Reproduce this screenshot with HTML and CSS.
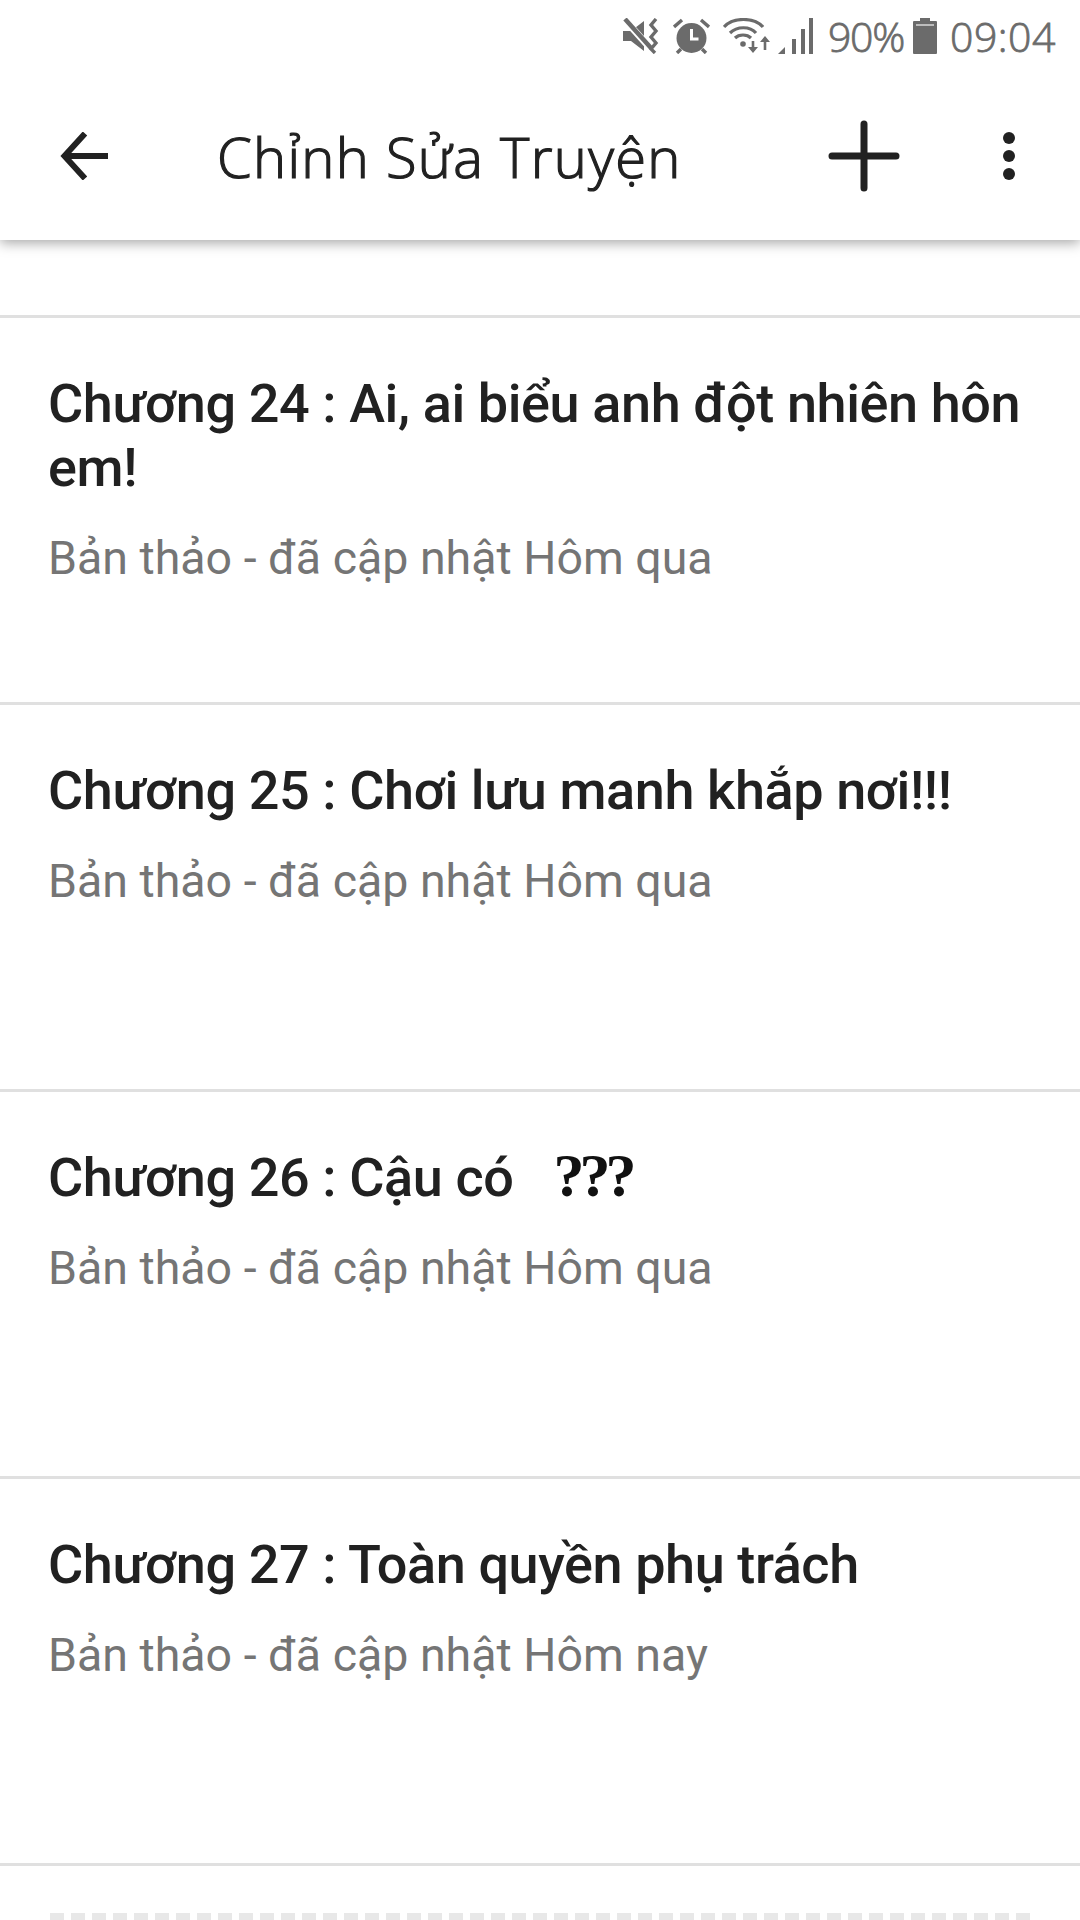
FILE: index.html
```html
<!DOCTYPE html>
<html lang="en">
<head>
    <meta charset="UTF-8">
    <meta name="viewport" content="width=device-width, initial-scale=1.0">
    <title>Chỉnh Sửa Truyện</title>
    <link rel="stylesheet" href="styles.css">
</head>
<body>
    <div class="status-bar">
        <svg class="icon-mute" width="37" height="36" viewBox="0 0 37 36">
            <path d="M0 13h8L21 3v30L8 23H0z" fill="#6b6b6b"/>
            <path d="M2 2l26 29" stroke="#fff" stroke-width="7"/>
            <path d="M2 1l26 29" stroke="#6b6b6b" stroke-width="4.5"/>
            <path d="M33 1l-5 6 5 6-5 6 5 6-5 6 4 4" fill="none" stroke="#6b6b6b" stroke-width="3.4"/>
        </svg>
        <svg class="icon-alarm" width="37" height="36" viewBox="0 0 37 36">
            <circle cx="18.5" cy="20" r="15" fill="#6b6b6b"/>
            <path d="M18.5 11v10h7" fill="none" stroke="#fff" stroke-width="3"/>
            <path d="M1 9l8-7M36 9l-8-7M4 35l4-4M33 35l-4-4" stroke="#6b6b6b" stroke-width="3.4"/>
        </svg>
        <svg class="icon-wifi" width="47" height="36" viewBox="0 0 47 36">
            <path d="M1 9C10-1 31-1 40 9" fill="none" stroke="#6b6b6b" stroke-width="3.2"/>
            <path d="M7 15C14 8 27 8 33 15" fill="none" stroke="#6b6b6b" stroke-width="3.2"/>
            <path d="M12 20c4-4 12-4 16 0" fill="none" stroke="#6b6b6b" stroke-width="3.2"/>
            <circle cx="20" cy="26" r="2.8" fill="#6b6b6b"/>
            <path d="M30 23v10M42 32V23" stroke="#6b6b6b" stroke-width="2.6"/>
            <path d="M25 29h10l-5 6zM37 24h10l-5-6z" fill="#6b6b6b"/>
        </svg>
        <svg class="icon-signal" width="35" height="36" viewBox="0 0 35 36">
            <path d="M0 36l7-7v7z" fill="#6b6b6b"/>
            <path d="M14 21h4v15h-4zM23 11h4v25h-4zM31 0h4v36h-4z" fill="#6b6b6b"/>
        </svg>
        <span class="status-text battery-text">90%</span>
        <svg class="icon-battery" width="24" height="36" viewBox="0 0 24 36">
            <path d="M7 0h10v3h6a1 1 0 0 1 1 1v31a1 1 0 0 1-1 1H1a1 1 0 0 1-1-1V4a1 1 0 0 1 1-1h6z" fill="#6b6b6b"/>
            <path d="M3 7h18" stroke="#bdbdbd" stroke-width="2"/>
        </svg>
        <span class="status-text clock">09:04</span>
    </div>

    <div class="app-bar">
        <svg class="back-icon" width="50" height="48" viewBox="0 0 50 48">
            <path d="M26 1.500L5.500 24l20.500 22.500M5.500 24H49" fill="none" stroke="#212121" stroke-width="6"/>
        </svg>
        <div class="app-title">Chỉnh Sửa Truyện</div>
        <svg class="add-icon" width="72" height="72" viewBox="0 0 72 72">
            <path d="M36 4v64M4 36h64" stroke="#212121" stroke-width="7" stroke-linecap="round"/>
        </svg>
        <svg class="more-icon" width="12" height="48" viewBox="0 0 12 48">
            <circle cx="6" cy="6" r="6" fill="#212121"/>
            <circle cx="6" cy="24" r="6" fill="#212121"/>
            <circle cx="6" cy="42" r="6" fill="#212121"/>
        </svg>
    </div>

    <div class="chapter-list">
        <div class="list-top"></div>
        <div class="chapter">
            <div class="chapter-title">Chương 24 : Ai, ai biểu anh đột nhiên hôn em!</div>
            <div class="chapter-meta">Bản thảo - đã cập nhật Hôm qua</div>
        </div>
        <div class="chapter">
            <div class="chapter-title">Chương 25 : Chơi lưu manh khắp nơi!!!</div>
            <div class="chapter-meta">Bản thảo - đã cập nhật Hôm qua</div>
        </div>
        <div class="chapter">
            <div class="chapter-title">Chương 26 : Cậu có <span class="odd-glyphs">???</span></div>
            <div class="chapter-meta">Bản thảo - đã cập nhật Hôm qua</div>
        </div>
        <div class="chapter">
            <div class="chapter-title">Chương 27 : Toàn quyền phụ trách</div>
            <div class="chapter-meta">Bản thảo - đã cập nhật Hôm nay</div>
        </div>
        <div class="chapter-cut">
            <div class="dashes"></div>
        </div>
    </div>
</body>
</html>
```

FILE: styles.css
```css
html, body {
    margin: 0;
    padding: 0;
}
body {
    width: 1080px;
    height: 1920px;
    overflow: hidden;
    background-color: #fff;
    font-family: Roboto, sans-serif;
}
svg {
    display: block;
    flex: none;
}
.status-bar {
    height: 72px;
    padding: 18px 0 0 623px;
    box-sizing: border-box;
    display: flex;
    align-items: flex-start;
    background-color: #fff;
    position: relative;
    z-index: 2;
}
.icon-mute {
    margin-right: 13px;
}
.icon-alarm {
    margin-right: 13px;
}
.icon-wifi {
    margin-right: 8px;
}
.status-text {
    font-family: "Open Sans", sans-serif;
    font-weight: 300;
    font-size: 41px;
    line-height: 36px;
    white-space: nowrap;
    color: #6b6b6b;
    -webkit-text-stroke: 0.8px #6b6b6b;
}
.battery-text {
    width: 75px;
    margin-left: 15px;
    margin-right: 10px;
    letter-spacing: -1.300px;
}
.clock {
    margin-left: 13px;
    letter-spacing: 0.5px;
}
.app-bar {
    height: 168px;
    box-sizing: border-box;
    display: flex;
    align-items: center;
    background-color: #fff;
    position: relative;
    z-index: 1;
    box-shadow: 0 3px 12px rgba(0,0,0,0.35);
}
.back-icon {
    margin-left: 59px;
}
.app-title {
    margin-left: 108px;
    width: 463px;
    font-family: "Open Sans", sans-serif;
    font-weight: 300;
    font-size: 56px;
    letter-spacing: 1.300px;
    white-space: nowrap;
    color: #212121;
    -webkit-text-stroke: 1.200px #212121;
}
.add-icon {
    margin-left: 148px;
}
.more-icon {
    margin-left: 103px;
}
.list-top {
    height: 75px;
    border-bottom: 3px solid #e0e0e0;
}
.chapter {
    height: 387px;
    box-sizing: border-box;
    border-bottom: 3px solid #e0e0e0;
    padding: 54px 40px 0 48px;
}
.chapter-title {
    font-weight: 500;
    font-size: 54px;
    line-height: 64px;
    letter-spacing: -0.4px;
    color: #212121;
}
.odd-glyphs {
    margin-left: 27px;
    font-family: "Liberation Serif", serif;
    font-weight: 700;
    font-size: 62px;
    line-height: 0;
    letter-spacing: -5px;
    color: #111;
}
.chapter-meta {
    margin-top: 32px;
    font-size: 46.5px;
    line-height: 52px;
    color: #757575;
}
.chapter-cut {
    height: 54px;
    box-sizing: border-box;
    padding: 47px 48px 0 50px;
}
.dashes {
    height: 7px;
    background: repeating-linear-gradient(90deg, #e8e8e8 0, #e8e8e8 14px, #fff 14px, #fff 21px);
}
```
